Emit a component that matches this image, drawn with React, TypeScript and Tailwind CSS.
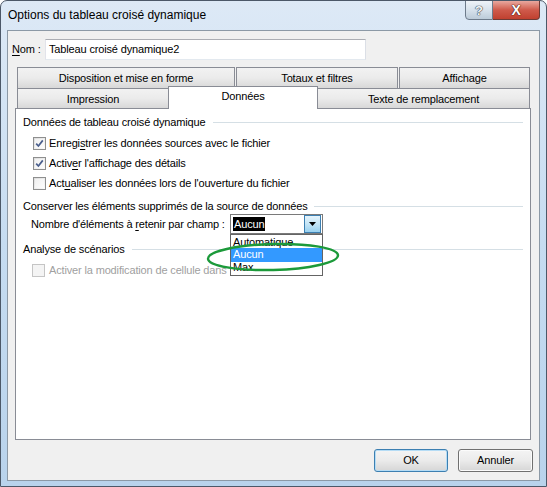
import React from "react";

const FONT = "font-['Liberation_Sans',Arial,sans-serif]";

function CheckBox({ checked, disabled }: { checked?: boolean; disabled?: boolean }) {
  return (
    <div
      className={`w-[13px] h-[13px] border ${disabled ? "border-[#c5c5c5] bg-[#f4f4f4]" : "border-[#8e8f8f] bg-linear-to-br from-[#dcdcdc] to-[#fcfcfc]"} flex items-center justify-center shrink-0`}
    >
      {!disabled && (
        <div className="w-[9px] h-[9px] bg-linear-to-br from-[#f0f0f0] to-[#fdfdfd] flex items-center justify-center">
          {checked && (
            <svg width="9" height="9" viewBox="0 0 9 9">
              <path d="M1.2 4.6 L3.4 7 L7.8 1.4" fill="none" stroke="#4a5f8d" strokeWidth="1.7" />
            </svg>
          )}
        </div>
      )}
    </div>
  );
}

function GroupHeader({ children, className = "" }: { children: React.ReactNode; className?: string }) {
  return (
    <div className={`h-[16px] flex items-center pl-[7px] pr-[7px] ${className}`}>
      <span className="whitespace-nowrap text-black">{children}</span>
      <div className="flex-1 h-px bg-[#d5dfe5] ml-[7px]" />
    </div>
  );
}

function Tab({ w, children }: { w: string; children: React.ReactNode }) {
  return (
    <div
      className={`${w} h-full border border-[#898c95] border-b-0 bg-linear-to-b from-[#f2f2f2] via-[#ebebeb] to-[#d8d8d8] flex items-center justify-center text-black whitespace-nowrap`}
    >
      {children}
    </div>
  );
}

export default function App() {
  return (
    <div className={`${FONT} text-[11px] tracking-[-0.15px] leading-none w-[547px] h-[487px] bg-white`}>
      <div className="relative w-[547px] h-[487px] border border-[#4c5868] rounded-t-[7px] bg-linear-to-b from-[#dde9f6] via-[#c6dcf1] to-[#b9d3ec] flex flex-col overflow-hidden">
        {/* Title bar */}
        <div className="h-[29px] flex items-start shrink-0">
          <div className="pl-[7px] pt-[8px] text-black text-[12px] tracking-normal whitespace-nowrap">Options du tableau croisé dynamique</div>
          <div className="flex-1" />
          <div className="flex mr-[6px] -mt-px">
            <div className="w-[28px] h-[20px] border border-[#6d7b8b] rounded-bl-[4px] bg-linear-to-b from-[#eef3f8] via-[#d7e2ec] to-[#bccbd9] flex items-center justify-center">
              <span className="text-[#f4f6f8] font-bold text-[13px] [text-shadow:0_0_1px_#3a4450,0_0_1px_#3a4450,0_0_1px_#3a4450]">?</span>
            </div>
            <div className="w-[47px] h-[20px] border border-l-0 border-[#6d3b36] rounded-br-[4px] bg-linear-to-b from-[#e8a89f] via-[#cf5a4b] to-[#c0402f] flex items-center justify-center">
              <span className="text-white font-bold text-[14px] [text-shadow:0_0_1px_#4a1a14,0_0_1px_#4a1a14,0_0_1px_#4a1a14]">X</span>
            </div>
          </div>
        </div>

        {/* Client area */}
        <div className="mx-[6px] h-[451px] border border-[#8c99a6] bg-[#f0f0f0] flex flex-col shrink-0">
          {/* Nom row */}
          <div className="mt-[8px] h-[21px] flex items-center pl-[4px]">
            <div className="w-[33px] text-black whitespace-nowrap">
              <span className="underline underline-offset-2">N</span>om :
            </div>
            <div className="w-[321px] h-[21px] border border-[#abadb3] border-l-[#e2e3ea] border-r-[#dbdfe6] border-b-[#e3e9ef] bg-white flex items-center pl-[3px] text-black whitespace-nowrap">
              Tableau croisé dynamique2
            </div>
          </div>

          {/* Tabs */}
          <div className="mt-[7px] ml-[9px] w-[513px] flex flex-col">
            <div className="h-[21px] flex gap-px">
              <Tab w="w-[218px]">Disposition et mise en forme</Tab>
              <Tab w="w-[162px]">Totaux et filtres</Tab>
              <Tab w="w-[131px]">Affichage</Tab>
            </div>
            <div className="h-[20px] flex items-end">
              <div className="w-[151px] h-[20px] border border-[#898c95] border-b-0 border-r-0 bg-linear-to-b from-[#f2f2f2] via-[#ebebeb] to-[#d8d8d8] flex items-center justify-center text-black whitespace-nowrap pt-[2px]">
                Impression
              </div>
              <div className="relative top-[1px] z-10 w-[150px] h-[23px] border border-[#898c95] border-b-0 bg-white flex items-start justify-center pt-[4px] text-black whitespace-nowrap">
                Données
              </div>
              <div className="w-[212px] h-[20px] border border-[#898c95] border-b-0 border-l-0 bg-linear-to-b from-[#f2f2f2] via-[#ebebeb] to-[#d8d8d8] flex items-center justify-center text-black whitespace-nowrap pt-[2px]">
                Texte de remplacement
              </div>
            </div>
          </div>

          {/* Panel */}
          <div className="ml-[7px] w-[516px] h-[332px] border border-[#898c95] bg-white flex flex-col">
            <GroupHeader className="mt-[5px]">Données de tableau croisé dynamique</GroupHeader>
            <div className="mt-[3px] h-[20px] flex items-center pl-[17px] gap-[3px] text-black whitespace-nowrap">
              <CheckBox checked />
              <span>
                Enregi<span className="underline underline-offset-2">s</span>trer les données sources avec le fichier
              </span>
            </div>
            <div className="h-[20px] flex items-center pl-[17px] gap-[3px] text-black whitespace-nowrap">
              <CheckBox checked />
              <span>
                Activ<span className="underline underline-offset-2">e</span>r l'affichage des détails
              </span>
            </div>
            <div className="h-[20px] flex items-center pl-[17px] gap-[3px] text-black whitespace-nowrap">
              <CheckBox />
              <span>
                Act<span className="underline underline-offset-2">u</span>aliser les données lors de l'ouverture du fichier
              </span>
            </div>
            <GroupHeader className="mt-[5px]">Conserver les éléments supprimés de la source de données</GroupHeader>
            <div className="h-[20px] flex items-center pl-[15px] text-black whitespace-nowrap">
              <span className="w-[199px]">
                Nombre d'éléments à <span className="underline underline-offset-2">r</span>etenir par champ :
              </span>
              <div className="w-[93px] h-[20px] border border-[#7a7a7a] bg-white flex items-center pl-[2px] pr-px">
                <span className="bg-black text-white h-[14px] px-px flex items-center">Aucun</span>
                <div className="flex-1" />
                <div className="w-[17px] h-[18px] border border-[#3c7fb1] bg-linear-to-b from-[#e5f4fc] via-[#c4e5f6] to-[#98d1ef] flex items-center justify-center">
                  <svg width="7" height="4" viewBox="0 0 7 4">
                    <path d="M0 0 H7 L3.5 4 Z" fill="#000" />
                  </svg>
                </div>
              </div>
            </div>
            <GroupHeader className="mt-[7px]">Analyse de scénarios</GroupHeader>
            <div className="mt-[3px] h-[20px] flex items-center pl-[16px] gap-[4px] text-[#a0a0a0] whitespace-nowrap">
              <CheckBox disabled />
              <span>Activer la modification de cellule dans</span>
            </div>
          </div>

          {/* Buttons */}
          <div className="mt-[9px] flex justify-end pr-[6px] gap-[10px]">
            <div className="w-[74px] h-[23px] rounded-[3px] border border-[#3c7fb1] bg-linear-to-b from-[#f4f4f4] via-[#ebebeb] to-[#d6d6d6] flex items-center justify-center text-black shadow-[inset_0_0_0_1px_#b5dcf5]">
              OK
            </div>
            <div className="w-[75px] h-[23px] rounded-[3px] border border-[#707070] bg-linear-to-b from-[#f4f4f4] via-[#ebebeb] to-[#d6d6d6] flex items-center justify-center text-black shadow-[inset_0_0_0_1px_#fbfbfb]">
              Annuler
            </div>
          </div>
        </div>

        {/* Dropdown list (overlay) */}
        <div className="absolute left-[229px] top-[233px] w-[93px] h-[42px] border border-[#646464] bg-white flex flex-col py-px text-black whitespace-nowrap">
          <div className="h-[13px] flex items-center pl-[2px]">Automatique</div>
          <div className="h-[14px] flex items-center pl-[2px] bg-[#3399ff] text-white">Aucun</div>
          <div className="h-[13px] flex items-center pl-[2px]">Max.</div>
        </div>

        {/* Green ellipse annotation */}
        <svg className="absolute left-[204px] top-[240px] pointer-events-none" width="136" height="32" viewBox="0 0 136 32">
          <ellipse cx="68" cy="16" rx="65" ry="13" fill="none" stroke="#1c9a3a" strokeWidth="2.5" transform="rotate(-1.5 68 16)" />
        </svg>
      </div>
    </div>
  );
}
